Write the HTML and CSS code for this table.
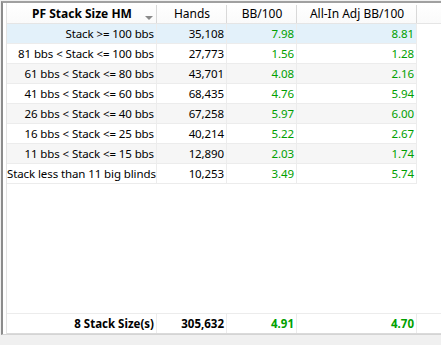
FILE: index.html
```html
<!DOCTYPE html>
<html lang="en">
<head>
    <meta charset="UTF-8">
    <title>PF Stack Size HM</title>
    <link rel="stylesheet" href="styles.css">
</head>
<body>
    <div class="panel">
        <div class="grid">
            <div class="grid-header">
                <div class="hcell sorted">PF Stack Size HM<span class="drop-arrow"></span></div>
                <div class="hcell">Hands</div>
                <div class="hcell">BB/100</div>
                <div class="hcell">All-In Adj BB/100</div>
            </div>

            <div class="grid-body">
                <div class="grid-row odd selected">
                    <div class="cell">Stack &gt;= 100 bbs</div>
                    <div class="cell">35,108</div>
                    <div class="cell win">7.98</div>
                    <div class="cell win">8.81</div>
                </div>
                <div class="grid-row">
                    <div class="cell">81 bbs &lt; Stack &lt;= 100 bbs</div>
                    <div class="cell">27,773</div>
                    <div class="cell win">1.56</div>
                    <div class="cell win">1.28</div>
                </div>
                <div class="grid-row odd">
                    <div class="cell">61 bbs &lt; Stack &lt;= 80 bbs</div>
                    <div class="cell">43,701</div>
                    <div class="cell win">4.08</div>
                    <div class="cell win">2.16</div>
                </div>
                <div class="grid-row">
                    <div class="cell">41 bbs &lt; Stack &lt;= 60 bbs</div>
                    <div class="cell">68,435</div>
                    <div class="cell win">4.76</div>
                    <div class="cell win">5.94</div>
                </div>
                <div class="grid-row odd">
                    <div class="cell">26 bbs &lt; Stack &lt;= 40 bbs</div>
                    <div class="cell">67,258</div>
                    <div class="cell win">5.97</div>
                    <div class="cell win">6.00</div>
                </div>
                <div class="grid-row">
                    <div class="cell">16 bbs &lt; Stack &lt;= 25 bbs</div>
                    <div class="cell">40,214</div>
                    <div class="cell win">5.22</div>
                    <div class="cell win">2.67</div>
                </div>
                <div class="grid-row odd">
                    <div class="cell">11 bbs &lt; Stack &lt;= 15 bbs</div>
                    <div class="cell">12,890</div>
                    <div class="cell win">2.03</div>
                    <div class="cell win">1.74</div>
                </div>
                <div class="grid-row">
                    <div class="cell">Stack less than 11 big blinds</div>
                    <div class="cell">10,253</div>
                    <div class="cell win">3.49</div>
                    <div class="cell win">5.74</div>
                </div>
            </div>

            <div class="grid-footer">
                <div class="cell">8 Stack Size(s)</div>
                <div class="cell">305,632</div>
                <div class="cell win">4.91</div>
                <div class="cell win">4.70</div>
            </div>
        </div>
    </div>
</body>
</html>
```

FILE: styles.css
```css
body {
    font-family: "Noto Sans", "Open Sans", sans-serif;
    font-size: 11.5px;
    margin: 0;
    background: #f0f0f0;
    color: #000;
}
.panel {
    margin: 1px 0 0 1px;
    height: 331px;
    padding-left: 3px;
    background: #fff;
    border-top: 2px solid #a0a0a0;
    border-left: 2px solid #8c8c8c;
    border-bottom: 1px solid #d4d4d4;
}
.grid {
    height: 100%;
    display: flex;
    flex-direction: column;
    border-left: 1px solid #e3e3e3;
}
.grid-header,
.grid-row,
.grid-footer {
    display: grid;
    grid-template-columns: 150px 70px 70px 120px;
}
.grid-header {
    height: 20px;
    border-bottom: 1px solid #e5e5e5;
    background: linear-gradient(#fff, #fafafa);
    font-size: 12px;
}
.hcell {
    position: relative;
    display: flex;
    align-items: center;
    justify-content: center;
    white-space: nowrap;
}
.hcell::after {
    content: "";
    position: absolute;
    right: 0;
    top: 2px;
    bottom: 0;
    border-right: 1px solid #d9d9d9;
}
.hcell.sorted { font-weight: bold; }
.drop-arrow {
    position: absolute;
    right: 4px;
    top: 13px;
    border-left: 4px solid transparent;
    border-right: 4px solid transparent;
    border-top: 4px solid #8a8a8a;
}
.grid-body {
    flex: 1;
}
.grid-row {
    height: 19px;
    border-bottom: 1px solid #ececec;
    width: 410px;
}
.grid-row.odd { background: #f6f6f6; }
.grid-row.selected { background: #e3f1fa; }
.cell {
    line-height: 19px;
    text-align: right;
    padding-right: 2px;
    border-right: 1px solid #ececec;
    white-space: nowrap;
    letter-spacing: -0.1px;
}
.win { color: #00a000; }
.grid-footer {
    height: 19px;
    border-top: 1px solid #ececec;
    border-bottom: 1px solid #dadada;
    font-weight: bold;
}
.grid-footer .cell {
    background: #fff;
    letter-spacing: 0;
}
```
